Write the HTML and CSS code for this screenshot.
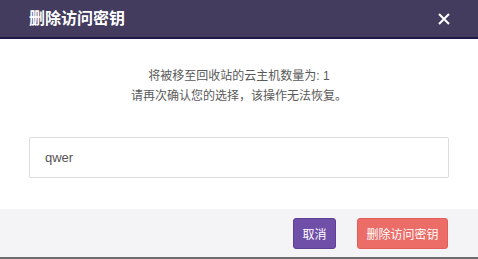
FILE: index.html
```html
<!DOCTYPE html>
<html lang="zh-CN">
<head>
    <meta charset="UTF-8">
    <meta name="viewport" content="width=device-width, initial-scale=1.0">
    <title>删除访问密钥</title>
    <link rel="stylesheet" href="styles.css">
</head>
<body>
    <div class="modal">
        <div class="modal-header">
            <h3 class="modal-title">删除访问密钥</h3>
            <button class="close" type="button" aria-label="关闭">
                <svg width="12" height="12" viewBox="0 0 12 12">
                    <path d="M1 1L11 11M11 1L1 11" stroke="#fff" stroke-width="2" stroke-linecap="butt" fill="none"/>
                </svg>
            </button>
        </div>
        <div class="modal-body">
            <p class="message">将被移至回收站的云主机数量为: 1<br>请再次确认您的选择，该操作无法恢复。</p>
            <input class="key-input" type="text" value="qwer">
        </div>
        <div class="modal-footer">
            <button class="btn btn-cancel" type="button">取消</button>
            <button class="btn btn-danger" type="button">删除访问密钥</button>
        </div>
    </div>
</body>
</html>
```

FILE: styles.css
```css
html, body {
    margin: 0;
    padding: 0;
    background: #fff;
}
body {
    font-family: "Liberation Sans", "Noto Sans CJK SC", sans-serif;
    color: #555;
}
.modal {
    width: 478px;
    height: 259px;
    display: flex;
    flex-direction: column;
    box-sizing: border-box;
    border-bottom: 2px solid #6d6d70;
}
.modal-header {
    height: 37px;
    background-color: #433c5f;
    border-bottom: 2px solid #1f1a48;
    display: flex;
    align-items: center;
    justify-content: space-between;
    padding: 0 28px 0 29px;
}
.modal-title {
    margin: 0;
    font-size: 16px;
    font-weight: bold;
    color: #fff;
    line-height: 20px;
}
.close {
    background: none;
    border: none;
    padding: 0;
    width: 12px;
    height: 12px;
    display: flex;
    cursor: pointer;
}
.modal-body {
    flex: 1;
    padding: 0 29px;
}
.message {
    margin: 27px 0 31px;
    text-align: center;
    font-size: 12px;
    line-height: 20px;
    color: #5a5a5a;
}
.key-input {
    display: block;
    width: 100%;
    height: 41px;
    box-sizing: border-box;
    border: 1px solid #dcdcdc;
    border-radius: 2px;
    padding: 0 15px;
    font-family: "Liberation Sans", sans-serif;
    font-size: 13px;
    color: #555;
    outline: none;
}
.modal-footer {
    height: 48px;
    background-color: #f4f4f6;
    display: flex;
    align-items: center;
    justify-content: flex-end;
    gap: 21px;
    padding: 0 30px;
}
.btn {
    height: 31px;
    padding: 0 8.5px;
    border: 1px solid transparent;
    border-radius: 3px;
    font-family: "Liberation Sans", "Noto Sans CJK SC", sans-serif;
    font-size: 12px;
    color: #fff;
    cursor: pointer;
}
.btn-cancel {
    background-color: #6f4fa8;
    border-color: #5d3f96;
}
.btn-danger {
    background-color: #ec6c67;
    border-color: #e45e59;
}
```
